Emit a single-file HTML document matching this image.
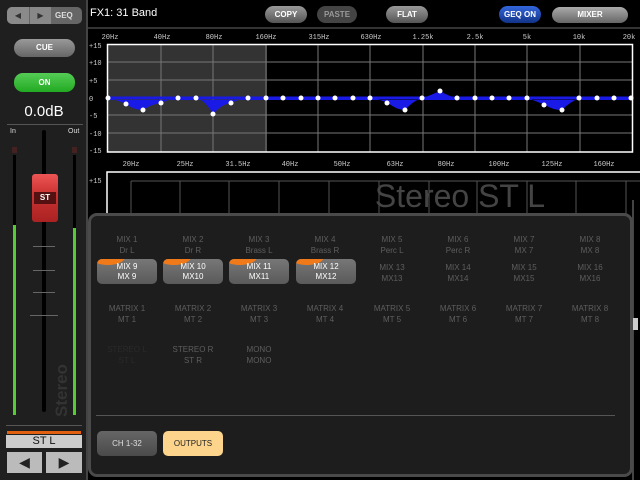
<!DOCTYPE html><html><head><style>
*{margin:0;padding:0;box-sizing:border-box}
body{width:640px;height:480px;background:#000;position:relative;overflow:hidden;font-family:"Liberation Sans",sans-serif}
.a{position:absolute}
.btn{position:absolute;border-radius:9px;font-size:8px;color:#fff;text-align:center;font-weight:bold}
.it{position:absolute;width:62px;text-align:center;font-size:8px;line-height:11px;color:#5e5e5e}
.hb{position:absolute;width:60px;height:25px;border-radius:5px;background:linear-gradient(#777,#5a5a5a);color:#fff;font-size:8px;line-height:10px;text-align:center;padding-top:3px;overflow:hidden}
.hb:before{content:"";position:absolute;left:-6px;top:-10px;width:34px;height:16px;border-radius:50%;background:#f07a1a}
.hb span{position:relative}
</style></head><body>
<div class="a" style="left:0;top:0;width:88px;height:480px;background:#1f1f1f;border-right:2px solid #444"></div>
<div class="a" style="left:7px;top:7px;width:75px;height:17px;border-radius:5px;background:#666"></div>
<div class="a" style="left:7px;top:7px;width:22px;height:17px;border-radius:5px 0 0 5px;background:#8a8a8a;color:#333;font-size:8px;text-align:center;line-height:17px">◀</div>
<div class="a" style="left:30px;top:7px;width:21px;height:17px;background:#888;color:#333;font-size:8px;text-align:center;line-height:17px">▶</div>
<div class="a" style="left:55px;top:7px;color:#ddd;font-size:8px;line-height:17px;font-weight:bold">GEQ</div>
<div class="btn" style="left:14px;top:39px;width:61px;height:18px;background:linear-gradient(#999,#666);line-height:18px">CUE</div>
<div class="btn" style="left:14px;top:73px;width:61px;height:19px;background:linear-gradient(#5c5,#2a2);line-height:19px">ON</div>
<div class="a" style="left:0;width:88px;top:103px;text-align:center;color:#fff;font-size:15px">0.0dB</div>
<div class="a" style="left:7px;top:124px;width:76px;height:1px;background:#555"></div>
<div class="a" style="left:10px;top:128px;color:#ddd;font-size:7px">In</div>
<div class="a" style="left:68px;top:128px;color:#ddd;font-size:7px">Out</div>
<div class="a" style="left:12px;top:147px;width:5px;height:6px;background:#422"></div>
<div class="a" style="left:72px;top:147px;width:5px;height:6px;background:#422"></div>
<div class="a" style="left:13px;top:155px;width:3px;height:260px;background:#000"></div>
<div class="a" style="left:13px;top:225px;width:3px;height:190px;background:#5c3"></div>
<div class="a" style="left:73px;top:155px;width:3px;height:260px;background:#000"></div>
<div class="a" style="left:73px;top:228px;width:3px;height:187px;background:#5c3"></div>
<div class="a" style="left:42px;top:130px;width:4px;height:282px;background:#000;border-radius:2px"></div>
<div class="a" style="left:33px;top:246px;width:22px;height:1px;background:#666"></div>
<div class="a" style="left:33px;top:270px;width:22px;height:1px;background:#666"></div>
<div class="a" style="left:33px;top:292px;width:22px;height:1px;background:#666"></div>
<div class="a" style="left:30px;top:315px;width:28px;height:1px;background:#666"></div>
<div class="a" style="left:32px;top:174px;width:26px;height:48px;border-radius:3px;background:linear-gradient(#e55,#c33 40%,#a22)"></div>
<div class="a" style="left:34px;top:192px;width:22px;height:12px;background:#511;color:#fff;font-size:8px;text-align:center;line-height:12px;font-weight:bold">ST</div>
<div class="a" style="transform:rotate(-90deg);transform-origin:0 0;color:#333;font-size:17px;font-weight:bold;white-space:nowrap;top:417px;left:52px">Stereo</div>
<div class="a" style="left:6px;top:425px;width:76px;height:1px;background:#555"></div>
<div class="a" style="left:7px;top:431px;width:74px;height:3px;background:#e06010"></div>
<div class="a" style="left:6px;top:435px;width:76px;height:13px;background:#ccc;color:#111;font-size:11px;text-align:center;line-height:13px">ST L</div>
<div class="a" style="left:7px;top:452px;width:35px;height:21px;background:#bbb;color:#222;font-size:14px;text-align:center;line-height:21px">◀</div>
<div class="a" style="left:46px;top:452px;width:36px;height:21px;background:#bbb;color:#222;font-size:14px;text-align:center;line-height:21px">▶</div>
<div class="a" style="left:90px;top:7px;color:#fff;font-size:11px">FX1: 31 Band</div>
<div class="btn" style="left:265px;top:6px;width:42px;height:17px;background:linear-gradient(#999,#555);line-height:17px">COPY</div>
<div class="btn" style="left:317px;top:6px;width:40px;height:17px;background:#444;color:#999;line-height:17px">PASTE</div>
<div class="btn" style="left:386px;top:6px;width:42px;height:17px;background:linear-gradient(#999,#555);line-height:17px">FLAT</div>
<div class="btn" style="left:499px;top:6px;width:42px;height:17px;background:linear-gradient(#36d,#138);line-height:17px">GEQ ON</div>
<div class="btn" style="left:552px;top:7px;width:76px;height:16px;background:linear-gradient(#aaa,#666);line-height:16px">MIXER</div>
<div class="a" style="left:88px;top:27px;width:552px;height:2px;background:#333"></div>
<svg class="a" style="left:0;top:0" width="640" height="480">
<g font-family="Liberation Mono" font-size="7" fill="#ccc" text-anchor="middle">
<text x="110" y="39">20Hz</text><text x="162" y="39">40Hz</text><text x="214" y="39">80Hz</text><text x="266" y="39">160Hz</text><text x="319" y="39">315Hz</text><text x="371" y="39">630Hz</text><text x="423" y="39">1.25k</text><text x="475" y="39">2.5k</text><text x="527" y="39">5k</text><text x="579" y="39">10k</text><text x="629" y="39">20k</text>
<text x="131" y="166">20Hz</text><text x="185" y="166">25Hz</text><text x="238" y="166">31.5Hz</text><text x="290" y="166">40Hz</text><text x="342" y="166">50Hz</text><text x="395" y="166">63Hz</text><text x="446" y="166">80Hz</text><text x="499" y="166">100Hz</text><text x="552" y="166">125Hz</text><text x="604" y="166">160Hz</text>
</g>
<g font-family="Liberation Mono" font-size="7" fill="#ccc">
<text x="89" y="48">+15</text><text x="89" y="65">+10</text><text x="89" y="83">+5</text><text x="89" y="101">0</text><text x="89" y="118">-5</text><text x="89" y="136">-10</text><text x="89" y="153">-15</text><text x="89" y="183">+15</text>
</g>
<rect x="107" y="45" width="160" height="107" fill="#333"/>
<g stroke="#777" stroke-width="1">
<path d="M161 45V152M213 45V152M266 45V152M318 45V152M370 45V152M423 45V152M475 45V152M527 45V152M580 45V152M107 62H632M107 80H632M107 115H632M107 133H632"/>
</g>
<path d="M108 98 Q117 100 126 104 Q134 110 143 110 Q152 104 161 103 Q170 99 178 98 L196 98 Q205 100 213 114 Q222 104 231 103 Q240 99 248 98 L370 98 Q379 99 388 103 Q397 110 405 110 Q414 100 423 98 Q431 95 440 91 Q448 96 457 98 L527 98 Q536 101 545 105 Q553 110 562 110 Q571 101 580 98 L632 98 V100 H108Z" fill="#1a1ae6"/>
<path d="M108 98H632" stroke="#1a1ae6" stroke-width="3"/>
<g fill="#fff">
<circle cx="108" cy="98" r="2.5"/><circle cx="126" cy="104" r="2.5"/><circle cx="143" cy="110" r="2.5"/><circle cx="161" cy="103" r="2.5"/><circle cx="178" cy="98" r="2.5"/><circle cx="196" cy="98" r="2.5"/><circle cx="213" cy="114" r="2.5"/><circle cx="231" cy="103" r="2.5"/><circle cx="248" cy="98" r="2.5"/><circle cx="266" cy="98" r="2.5"/><circle cx="283" cy="98" r="2.5"/><circle cx="301" cy="98" r="2.5"/><circle cx="318" cy="98" r="2.5"/><circle cx="335" cy="98" r="2.5"/><circle cx="353" cy="98" r="2.5"/><circle cx="370" cy="98" r="2.5"/><circle cx="387" cy="103" r="2.5"/><circle cx="405" cy="110" r="2.5"/><circle cx="422" cy="98" r="2.5"/><circle cx="440" cy="91" r="2.5"/><circle cx="457" cy="98" r="2.5"/><circle cx="475" cy="98" r="2.5"/><circle cx="492" cy="98" r="2.5"/><circle cx="509" cy="98" r="2.5"/><circle cx="527" cy="98" r="2.5"/><circle cx="544" cy="105" r="2.5"/><circle cx="562" cy="110" r="2.5"/><circle cx="579" cy="98" r="2.5"/><circle cx="597" cy="98" r="2.5"/><circle cx="614" cy="98" r="2.5"/><circle cx="631" cy="98" r="2.5"/>
</g>
<rect x="107.5" y="44.5" width="525" height="107.5" fill="none" stroke="#fff" stroke-width="1.5"/>
<path d="M107 215V172H640" stroke="#fff" stroke-width="1.5" fill="none"/>
<g stroke="#555" fill="none"><path d="M131 181H640M131 181V215M180 181V215M229 181V215M279 181V215M329 181V215M379 181V215M429 181V215M477 181V215M527 181V215M576 181V215M626 181V215"/></g>
<text x="460" y="207" font-family="Liberation Sans" font-size="32" fill="#444" text-anchor="middle">Stereo ST L</text>
<path d="M633 200V480" stroke="#444" stroke-width="2"/>
<rect x="633" y="318" width="5" height="12" fill="#ccc"/>
</svg>
<div class="a" style="left:88px;top:213px;width:545px;height:264px;border-radius:9px;background:#1d1d1d;border:3px solid #4a4a4a"></div>
<div class="it" style="left:96px;top:234px">MIX 1<br>Dr L</div>
<div class="it" style="left:162px;top:234px">MIX 2<br>Dr R</div>
<div class="it" style="left:228px;top:234px">MIX 3<br>Brass L</div>
<div class="it" style="left:294px;top:234px">MIX 4<br>Brass R</div>
<div class="it" style="left:361px;top:234px">MIX 5<br>Perc L</div>
<div class="it" style="left:427px;top:234px">MIX 6<br>Perc R</div>
<div class="it" style="left:493px;top:234px">MIX 7<br>MX 7</div>
<div class="it" style="left:559px;top:234px">MIX 8<br>MX 8</div>
<div class="hb" style="left:97px;top:259px"><span>MIX 9<br>MX 9</span></div>
<div class="hb" style="left:163px;top:259px"><span>MIX 10<br>MX10</span></div>
<div class="hb" style="left:229px;top:259px"><span>MIX 11<br>MX11</span></div>
<div class="hb" style="left:296px;top:259px"><span>MIX 12<br>MX12</span></div>
<div class="it" style="left:361px;top:262px">MIX 13<br>MX13</div>
<div class="it" style="left:427px;top:262px">MIX 14<br>MX14</div>
<div class="it" style="left:493px;top:262px">MIX 15<br>MX15</div>
<div class="it" style="left:559px;top:262px">MIX 16<br>MX16</div>
<div class="it" style="left:96px;top:303px">MATRIX 1<br>MT 1</div>
<div class="it" style="left:162px;top:303px">MATRIX 2<br>MT 2</div>
<div class="it" style="left:228px;top:303px">MATRIX 3<br>MT 3</div>
<div class="it" style="left:294px;top:303px">MATRIX 4<br>MT 4</div>
<div class="it" style="left:361px;top:303px">MATRIX 5<br>MT 5</div>
<div class="it" style="left:427px;top:303px">MATRIX 6<br>MT 6</div>
<div class="it" style="left:493px;top:303px">MATRIX 7<br>MT 7</div>
<div class="it" style="left:559px;top:303px">MATRIX 8<br>MT 8</div>
<div class="it" style="left:96px;top:344px;color:#2a2a2a">STEREO L<br>ST L</div>
<div class="it" style="left:162px;top:344px">STEREO R<br>ST R</div>
<div class="it" style="left:228px;top:344px">MONO<br>MONO</div>
<div class="a" style="left:96px;top:415px;width:519px;height:1px;background:#555"></div>
<div class="a" style="left:97px;top:431px;width:60px;height:25px;border-radius:5px;background:linear-gradient(#666,#4a4a4a);color:#ddd;font-size:8px;text-align:center;line-height:25px">CH 1-32</div>
<div class="a" style="left:163px;top:431px;width:60px;height:25px;border-radius:5px;background:#fcd48c;color:#222;font-size:8px;text-align:center;line-height:25px">OUTPUTS</div>
</body></html>
